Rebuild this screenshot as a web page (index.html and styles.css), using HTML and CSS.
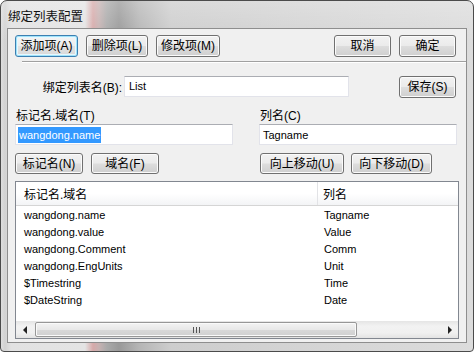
FILE: index.html
```html
<!DOCTYPE html>
<html lang="zh">
<head>
  <meta charset="UTF-8" />
  <title>绑定列表配置</title>
  <link rel="stylesheet" href="styles.css">
</head>
<body>
  <div class="window">
    <div class="titlebar">
      <span class="title">绑定列表配置</span>
    </div>

    <div class="client">
      <div class="toolbar">
        <button class="btn default w63">添加项(A)</button>
        <button class="btn w62">删除项(L)</button>
        <button class="btn w64">修改项(M)</button>
        <div class="spacer"></div>
        <button class="btn w57">取消</button>
        <button class="btn w57">确定</button>
      </div>

      <div class="sep"></div>

      <div class="name-row">
        <label class="name-label">绑定列表名(B):</label>
        <div class="input name-input">List</div>
        <div class="spacer"></div>
        <button class="btn w57 save">保存(S)</button>
      </div>

      <div class="fields">
        <div class="field left">
          <label class="field-label">标记名.域名(T)</label>
          <div class="input"><span class="selected">wangdong.name</span></div>
          <div class="btn-row">
            <button class="btn w68">标记名(N)</button>
            <button class="btn w68">域名(F)</button>
          </div>
        </div>
        <div class="field right">
          <label class="field-label">列名(C)</label>
          <div class="input">Tagname</div>
          <div class="btn-row tight">
            <button class="btn w84">向上移动(U)</button>
            <button class="btn w81">向下移动(D)</button>
          </div>
        </div>
      </div>

      <div class="listview">
        <div class="lv-head">
          <div class="col1">标记名.域名</div>
          <div class="col2">列名</div>
        </div>
        <div class="lv-body">
          <div class="lv-row"><div class="col1">wangdong.name</div><div class="col2">Tagname</div></div>
          <div class="lv-row"><div class="col1">wangdong.value</div><div class="col2">Value</div></div>
          <div class="lv-row"><div class="col1">wangdong.Comment</div><div class="col2">Comm</div></div>
          <div class="lv-row"><div class="col1">wangdong.EngUnits</div><div class="col2">Unit</div></div>
          <div class="lv-row"><div class="col1">$Timestring</div><div class="col2">Time</div></div>
          <div class="lv-row"><div class="col1">$DateString</div><div class="col2">Date</div></div>
        </div>
        <div class="hscroll">
          <div class="arrow"><span class="tri-left"></span></div>
          <div class="track">
            <div class="thumb"><span class="grip"></span></div>
          </div>
          <div class="arrow"><span class="tri-right"></span></div>
        </div>
      </div>
    </div>
  </div>
</body>
</html>
```

FILE: styles.css
```css
* { box-sizing: border-box; margin: 0; padding: 0; }
body {
  font-family: "Liberation Sans", "Noto Sans CJK SC", sans-serif;
  font-size: 12px;
  color: #000;
  background: #fff;
}

.window {
  width: 474px;
  height: 352px;
  border: 1px solid #4b4b4b;
  border-radius: 7px 7px 4px 4px;
  padding: 0 6px 8px 6px;
  background:
    linear-gradient(180deg, rgba(255,255,255,0.25), rgba(255,255,255,0) 40px),
    linear-gradient(90deg, #dedede 0, #d2d2d2 4px, #e2e2e2 10px, #e4e4e4 84px, #d6a9a9 92px, #c6b2b2 98px, #a9a9a9 106px, #999 118px, #b5b5b5 138px, #cdcdcd 170px, #d4d4d4 300px, #dcdcdc 474px);
  display: flex;
  flex-direction: column;
  overflow: hidden;
}

.titlebar {
  height: 27px;
  display: flex;
  align-items: center;
  padding-left: 1px;
}
.title {
  font-size: 12.5px;
  color: #111;
  margin-top: 1px;
}

.client {
  flex: 1;
  background: #f0f0f0;
  border: 1px solid #8e8e8e;
  display: flex;
  flex-direction: column;
}

.spacer { flex: 1; }

.btn {
  height: 22px;
  font-family: inherit;
  font-size: 12px;
  color: #000;
  border: 1px solid #707070;
  border-radius: 3px;
  background: linear-gradient(180deg, #f2f2f2 0%, #ebebeb 48%, #dddddd 52%, #cfcfcf 100%);
  box-shadow: inset 0 0 0 1px #fbfbfb;
  display: flex;
  align-items: center;
  justify-content: center;
  line-height: 1;
}
.btn.default {
  border-color: #3c7fb1;
  box-shadow: inset 0 0 0 1px #9fe3fb, inset 0 0 0 2px #e8f7fd;
  background: linear-gradient(180deg, #f4f4f4 0%, #eeeeee 48%, #e2e2e2 52%, #d8d8d8 100%);
}
.w57 { width: 57px; }
.w62 { width: 62px; }
.w63 { width: 63px; }
.w64 { width: 64px; }
.w68 { width: 68px; }
.w81 { width: 81px; }
.w84 { width: 84px; }

.toolbar {
  display: flex;
  gap: 8px;
  margin-top: 6px;
  padding: 0 10px 0 7px;
}

.sep {
  margin: 4px 0 0 14px;
  height: 2px;
  border-top: 1px solid #a0a0a0;
  border-bottom: 1px solid #fff;
}

.input {
  height: 21px;
  background: #fff;
  border: 1px solid #e2e3ea;
  border-top-color: #abadb3;
  font-size: 11px;
  padding: 0 0 0 2px;
  display: flex;
  align-items: center;
  white-space: nowrap;
}

.name-row {
  display: flex;
  align-items: center;
  margin-top: 11px;
  padding-right: 10px;
}
.name-label {
  width: 114px;
  text-align: right;
}
.name-input {
  width: 225px;
  margin-left: 2px;
  padding-left: 4px;
}
.save { margin-top: 2px; }

.fields {
  display: flex;
  gap: 26px;
  margin-top: 11px;
  padding: 0 9px 0 7px;
}
.field { display: flex; flex-direction: column; }
.field.left { width: 218px; }
.field.right { flex: 1; }
.field-label {
  height: 15px;
  line-height: 15px;
  padding-left: 1px;
}
.field.right .input { padding-left: 3px; }
.selected {
  background: #3399ff;
  color: #fff;
  line-height: 16px;
  padding: 0 1px;
}

.btn-row {
  display: flex;
  gap: 8px;
  margin-top: 8px;
}
.btn-row.tight { gap: 7px; padding-left: 1px; }
.btn-row .btn { height: 21px; }

.listview {
  margin: 7px 7px 3px 7px;
  flex: 1;
  background: #fff;
  border: 1px solid #828790;
  display: flex;
  flex-direction: column;
}
.lv-head {
  height: 24px;
  display: flex;
  align-items: center;
  background: linear-gradient(180deg, #fff 0%, #fff 50%, #f3f4f6 100%);
  border-bottom: 1px solid #d5d5d5;
}
.lv-head .col1 {
  height: 100%;
  display: flex;
  align-items: center;
  border-right: 1px solid #e2e3e6;
}
.col1 { width: 302px; padding-left: 8px; }
.col2 { padding-left: 5px; }

.lv-body {
  flex: 1;
  font-size: 11px;
}
.lv-row {
  height: 17px;
  display: flex;
  align-items: center;
}
.lv-row .col2 { padding-left: 6px; }

.hscroll {
  height: 17px;
  display: flex;
  background: linear-gradient(180deg, #e5e5e5 0%, #f2f2f2 30%, #f0f0f0 70%, #e3e3e3 100%);
}
.arrow {
  width: 17px;
  display: flex;
  align-items: center;
  justify-content: center;
}
.tri-left {
  border-right: 4px solid #222;
  border-top: 4px solid transparent;
  border-bottom: 4px solid transparent;
}
.tri-right {
  border-left: 4px solid #222;
  border-top: 4px solid transparent;
  border-bottom: 4px solid transparent;
}
.track {
  flex: 1;
  padding: 1px 0 1px 2px;
  display: flex;
}
.thumb {
  width: 322px;
  border: 1px solid #979797;
  border-radius: 2px;
  background: linear-gradient(180deg, #f3f3f3 0%, #e8e8e8 50%, #d9d9d9 51%, #d0d0d0 100%);
  box-shadow: inset 0 0 0 1px #fafafa;
  display: flex;
  align-items: center;
  justify-content: center;
}
.grip {
  width: 7px;
  height: 6px;
  background: repeating-linear-gradient(90deg, #555 0, #555 1px, transparent 1px, transparent 3px);
}
```
